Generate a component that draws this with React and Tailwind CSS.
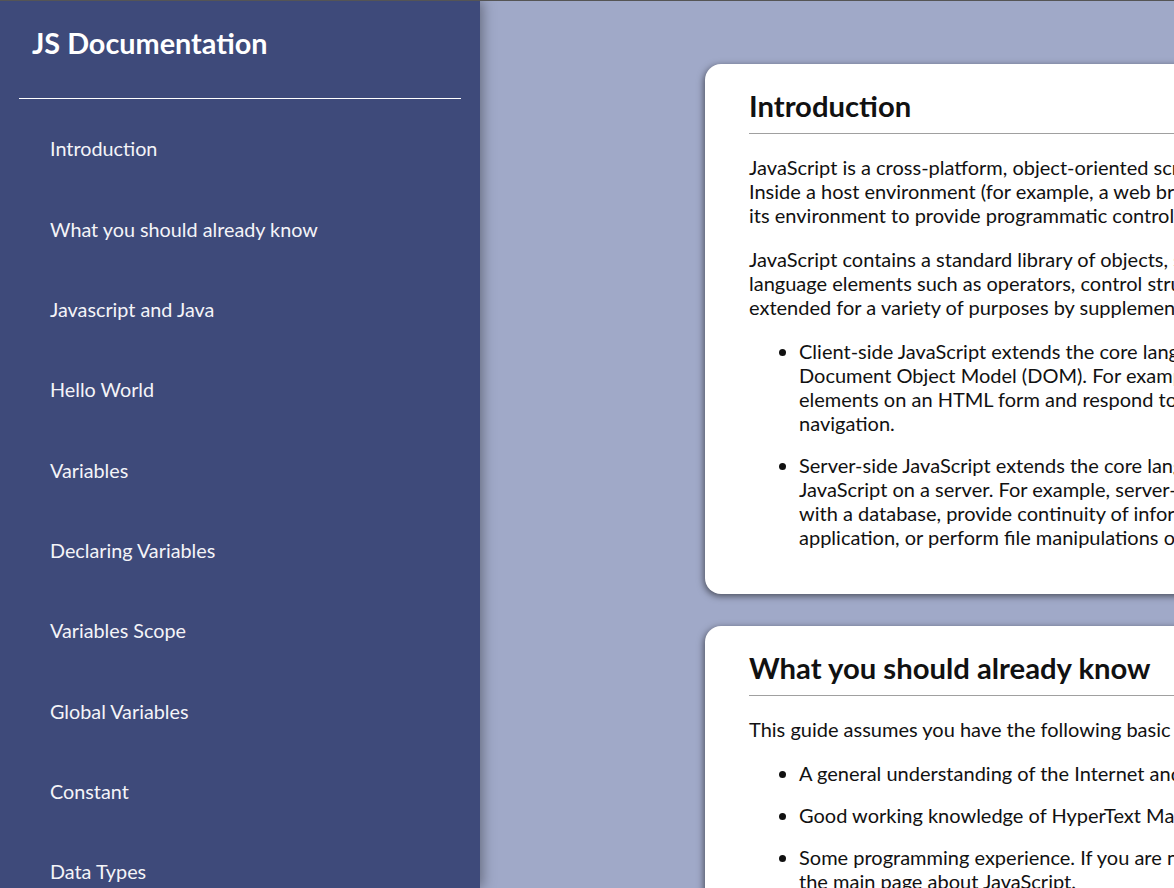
import React from "react";

const navItems = [
  "Introduction",
  "What you should already know",
  "Javascript and Java",
  "Hello World",
  "Variables",
  "Declaring Variables",
  "Variables Scope",
  "Global Variables",
  "Constant",
  "Data Types",
];

const Card = ({ title, children }) => (
  <section className="w-[1001px] shrink-0 rounded-2xl bg-white px-[44px] pt-[25px] pb-[27px] shadow-[-1px_2px_7px_rgba(0,0,0,0.55)]">
    <h2 className="border-b border-[#a0a0a0] pb-[10px] text-[29.25px] font-bold leading-[34px] text-[#111]">
      {title}
    </h2>
    <div className="mt-[21px] text-[20px] leading-[24px] text-[#111]">{children}</div>
  </section>
);

const App = () => {
  return (
    <div className="flex h-[888px] w-[1174px] overflow-hidden border-t border-[#555] font-['Lato','Noto_Sans',sans-serif]">
      {/* Sidebar */}
      <nav className="relative z-10 w-[480px] shrink-0 bg-[#3e4a7a] shadow-[3px_0_12px_rgba(0,0,0,0.35)]">
        <header className="px-[32px] pt-[25px] pb-[38px] text-[28.8px] font-bold leading-[34px] text-white">
          JS Documentation
        </header>
        <div className="mx-[19px] border-t border-white" />
        <ul className="mt-[10px]">
          {navItems.map((item) => (
            <li
              key={item}
              className="flex h-[80.33px] items-center pl-[50px] text-[19.8px] text-[#f4f4f8]"
            >
              {item}
            </li>
          ))}
        </ul>
      </nav>

      {/* Main */}
      <main className="flex flex-1 flex-col gap-[32px] bg-[#a0a9c8] pl-[225px] pt-[63px]">
        <Card title="Introduction">
          <p className="mb-[20px]">
            JavaScript is a cross-platform, object-oriented scripting language. It is a small and
            lightweight language. Inside a host environment (for example, a web browser), JavaScript
            can be connected to the objects of its environment to provide programmatic control over
            them.
          </p>
          <p className="mb-[20px]">
            JavaScript contains a standard library of objects, such as Array, Date, and Math, and a
            core set of language elements such as operators, control structures, and statements. Core
            JavaScript can be extended for a variety of purposes by supplementing it with additional
            objects; for example:
          </p>
          <ul className="list-disc pl-[50px]">
            <li className="mb-[18px]">
              Client-side JavaScript extends the core language by supplying objects to control a
              browser and its Document Object Model (DOM). For example, client-side extensions allow an
              application to place elements on an HTML form and respond to user events such as mouse
              clicks, form input, and page navigation.
            </li>
            <li className="mb-[18px]">
              Server-side JavaScript extends the core language by supplying objects relevant to running
              JavaScript on a server. For example, server-side extensions allow an application to
              communicate with a database, provide continuity of information from one invocation to
              another of the application, or perform file manipulations on a server.
            </li>
          </ul>
        </Card>
        <Card title="What you should already know">
          <p className="mb-[20px]">This guide assumes you have the following basic background:</p>
          <ul className="list-disc pl-[50px]">
            <li className="mb-[18px]">
              A general understanding of the Internet and the World Wide Web (WWW).
            </li>
            <li className="mb-[18px]">
              Good working knowledge of HyperText Markup Language (HTML).
            </li>
            <li className="mb-[18px]">
              Some programming experience. If you are new to programming, try one of the tutorials
              linked on the main page about JavaScript.
            </li>
          </ul>
        </Card>
      </main>
    </div>
  );
};

export default App;
